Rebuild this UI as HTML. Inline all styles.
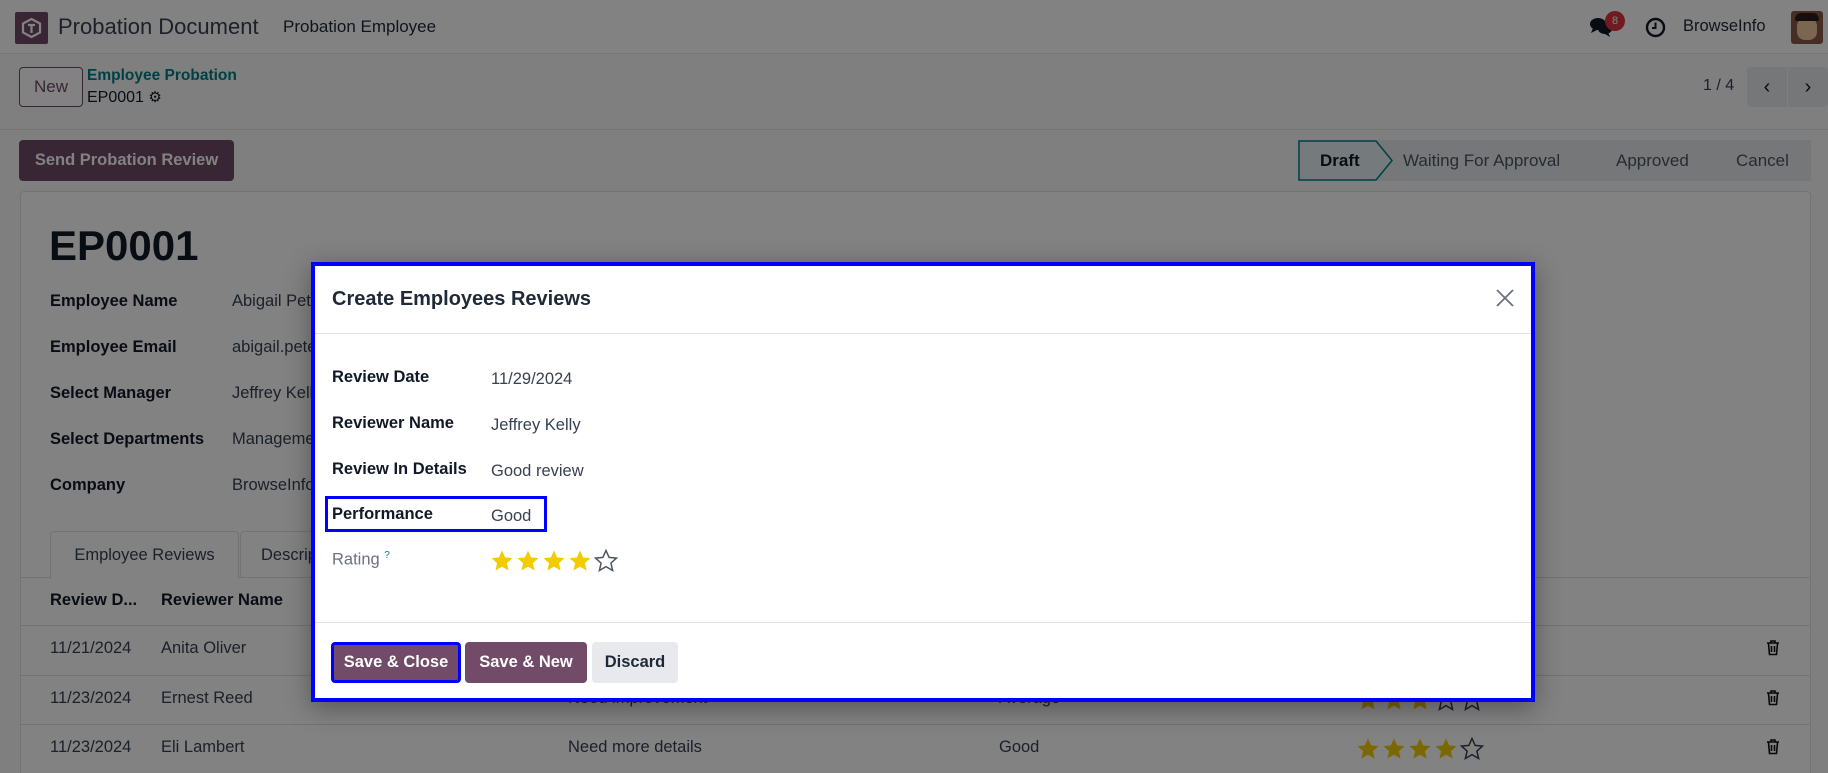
<!DOCTYPE html>
<html><head><meta charset="utf-8">
<style>
*{box-sizing:border-box;margin:0;padding:0}
html{width:1828px;height:773px;overflow:hidden}
body{width:1828px;height:773px;overflow:hidden;position:relative;font-family:"Liberation Sans",sans-serif;background:#f9fafb;color:#374151}
.a{position:absolute;white-space:nowrap}
.b{font-weight:bold;color:#111827}
.overlay{position:absolute;left:0;top:0;width:1828px;height:773px;background:rgba(0,0,0,0.49)}
.line{position:absolute;height:1px;background:#dee2e6}
.seg{position:absolute;top:140px;height:41px;background:#e7e9ed;color:#4b5563;font-size:17px;line-height:41px;clip-path:polygon(0 0,calc(100% - 16px) 0,100% 50%,calc(100% - 16px) 100%,0 100%,16px 50%)}
.modal{position:absolute;left:311px;top:262px;width:1224px;height:440px;background:#fff;border:4px solid #0000ff;box-shadow:0 6px 24px rgba(0,0,0,.35)}
.ml{position:absolute;left:17px;font-size:16.5px;font-weight:bold;color:#111827}
.mv{position:absolute;left:176px;font-size:16.5px;color:#374151}
.btn{position:absolute;top:376px;height:41px;border-radius:4px;font-size:16.5px;line-height:41px;text-align:center;font-weight:bold}
</style></head><body>
<svg width="0" height="0" style="position:absolute"><defs><path id="st" d="M12 1.5l3.1 6.9 7.4.7-5.6 5 1.7 7.4L12 17.6 5.4 21.5l1.7-7.4-5.6-5 7.4-.7z"/></defs></svg>
<!-- navbar -->
<div class="a" style="left:0;top:0;width:1828px;height:54px;background:#fff;border-bottom:1px solid #e5e7eb"></div>
<div class="a" style="left:15px;top:12px;width:33px;height:32px;background:#714b67;border-radius:2px"></div>
<svg class="a" style="left:19px;top:16px" width="25" height="24" viewBox="0 0 25 24"><path d="M12.5 3 L21 7.5 L21 16.5 L12.5 21 L4 16.5 L4 7.5Z" fill="none" stroke="#fff" stroke-width="2.2"/><path d="M9 9 h7 M12.5 9 v8" stroke="#fff" stroke-width="2.2"/></svg>
<div class="a" style="left:58px;top:14px;font-size:22px;color:#374151">Probation Document</div>
<div class="a" style="left:283px;top:17px;font-size:17px;color:#1f2937">Probation Employee</div>
<svg class="a" style="left:1589px;top:16px" width="24" height="22" viewBox="0 0 24 22"><ellipse cx="9" cy="8" rx="8" ry="6" fill="#111827"/><path d="M4 12 l-2 5 l6-3z" fill="#111827"/><ellipse cx="16" cy="13" rx="7" ry="5" fill="#111827"/><path d="M19 16 l2 5 l-5-3z" fill="#111827"/></svg>
<div class="a" style="left:1605px;top:11px;width:20px;height:20px;border-radius:10px;background:#d9363e;color:#fff;font-size:11px;line-height:20px;text-align:center">8</div>
<svg class="a" style="left:1645px;top:17px" width="21" height="21" viewBox="0 0 21 21"><circle cx="10.5" cy="10.5" r="8.5" fill="none" stroke="#111827" stroke-width="2.4"/><path d="M10.5 5.5 v5.5 h-3.5" fill="none" stroke="#111827" stroke-width="2"/></svg>
<div class="a" style="left:1683px;top:17px;font-size:16.5px;color:#1f2937">BrowseInfo</div>
<div class="a" style="left:1791px;top:11px;width:32px;height:33px;background:#8a5a4a;border-radius:3px"></div>
<div class="a" style="left:1797px;top:18px;width:20px;height:22px;background:#f1c8a0;border-radius:8px"></div>
<div class="a" style="left:1795px;top:13px;width:24px;height:8px;background:#2a1d1a;border-radius:6px 6px 2px 2px"></div>
<!-- control panel -->
<div class="a" style="left:19px;top:67px;width:64px;height:40px;border:1px solid #714b67;border-radius:4px;background:#fff;color:#714b67;font-size:17px;line-height:38px;text-align:center">New</div>
<div class="a" style="left:87px;top:67px;font-size:15.5px;font-weight:bold;color:#017e84">Employee Probation</div>
<div class="a" style="left:87px;top:88px;font-size:16px;color:#111827">EP0001 <span style="font-size:15px">⚙</span></div>
<div class="a" style="left:1703px;top:77px;font-size:16px;color:#374151">1 / 4</div>
<div class="a" style="left:1747px;top:67px;width:40px;height:40px;background:#e7e9ed;border-radius:4px 0 0 4px;text-align:center;line-height:40px;font-size:20px;color:#111827">‹</div>
<div class="a" style="left:1788px;top:67px;width:40px;height:40px;background:#e7e9ed;border-radius:0 4px 4px 0;text-align:center;line-height:40px;font-size:20px;color:#111827">›</div>
<div class="line" style="left:0;top:129px;width:1828px"></div>
<div class="a" style="left:19px;top:140px;width:215px;height:41px;background:#714b67;border-radius:4px;color:#fff;font-size:16.5px;font-weight:bold;line-height:41px;text-align:center">Send Probation Review</div>
<!-- statusbar -->
<div class="a" style="left:1298px;top:140px;width:513px;height:41px;background:#e7e9ed"></div>
<div class="seg" style="left:1690px;width:121px;clip-path:polygon(0 0,100% 0,100% 100%,0 100%,16px 50%);padding-left:46px">Cancel</div>
<div class="seg" style="left:1575px;width:130px;padding-left:41px">Approved</div>
<div class="seg" style="left:1378px;width:214px;padding-left:25px">Waiting For Approval</div>
<svg class="a" style="left:1298px;top:140px" width="96" height="41"><path d="M1 1 H78 L94 20.5 L78 40 H1Z" fill="#e6f2f3" stroke="#017e84" stroke-width="1.5"/><text x="22" y="26" font-family="Liberation Sans" font-size="17" font-weight="bold" fill="#111827">Draft</text></svg>
<!-- sheet -->
<div class="a" style="left:20px;top:191px;width:1791px;height:582px;background:#fff;border:1px solid #dee2e6;border-bottom:none;border-radius:4px 4px 0 0"></div>
<div class="a b" style="left:49px;top:222px;font-size:42px">EP0001</div>
<div class="a b" style="left:50px;top:292px;font-size:16.5px">Employee Name</div><div class="a" style="left:232px;top:292px;font-size:16.5px">Abigail Peterson</div>
<div class="a b" style="left:50px;top:338px;font-size:16.5px">Employee Email</div><div class="a" style="left:232px;top:338px;font-size:16.5px">abigail.peterson</div>
<div class="a b" style="left:50px;top:384px;font-size:16.5px">Select Manager</div><div class="a" style="left:232px;top:384px;font-size:16.5px">Jeffrey Kelly</div>
<div class="a b" style="left:50px;top:430px;font-size:16.5px">Select Departments</div><div class="a" style="left:232px;top:430px;font-size:16.5px">Management</div>
<div class="a b" style="left:50px;top:476px;font-size:16.5px">Company</div><div class="a" style="left:232px;top:476px;font-size:16.5px">BrowseInfo</div>
<div class="line" style="left:21px;top:577px;width:1789px"></div>
<div class="a" style="left:50px;top:531px;width:189px;height:48px;background:#fff;border:1px solid #dee2e6;border-bottom:none;border-radius:4px 4px 0 0;font-size:16.5px;line-height:46px;text-align:center;color:#374151">Employee Reviews</div>
<div class="a" style="left:240px;top:531px;width:150px;height:47px;border:1px solid #dee2e6;border-bottom:none;border-radius:4px 4px 0 0;font-size:16.5px;line-height:46px;padding-left:20px;color:#374151">Description</div>
<div class="a b" style="left:50px;top:591px;font-size:16.5px">Review D...</div>
<div class="a b" style="left:161px;top:591px;font-size:16.5px">Reviewer Name</div>
<div class="line" style="left:21px;top:625px;width:1789px"></div>
<div class="line" style="left:21px;top:675px;width:1789px"></div>
<div class="line" style="left:21px;top:724px;width:1789px"></div>
<div class="a" style="left:50px;top:639px;font-size:16.5px">11/21/2024</div><div class="a" style="left:161px;top:639px;font-size:16.5px">Anita Oliver</div>
<div class="a" style="left:50px;top:689px;font-size:16.5px">11/23/2024</div><div class="a" style="left:161px;top:689px;font-size:16.5px">Ernest Reed</div>
<div class="a" style="left:568px;top:689px;font-size:16.5px">Need improvement</div><div class="a" style="left:999px;top:689px;font-size:16.5px">Average</div>
<svg class="a" style="left:1356px;top:688px" width="134" height="24" viewBox="0 0 134 24"><use href="#st" x="0" fill="#f3cc00"/><use href="#st" x="26" fill="#f3cc00"/><use href="#st" x="52" fill="#f3cc00"/><use href="#st" x="78" fill="none" stroke="#374151" stroke-width="1.5"/><use href="#st" x="104" fill="none" stroke="#374151" stroke-width="1.5"/></svg>
<div class="a" style="left:50px;top:738px;font-size:16.5px">11/23/2024</div><div class="a" style="left:161px;top:738px;font-size:16.5px">Eli Lambert</div>
<div class="a" style="left:568px;top:738px;font-size:16.5px">Need more details</div><div class="a" style="left:999px;top:738px;font-size:16.5px">Good</div>
<svg class="a" style="left:1356px;top:737px" width="134" height="24" viewBox="0 0 134 24"><use href="#st" x="0" fill="#f3cc00"/><use href="#st" x="26" fill="#f3cc00"/><use href="#st" x="52" fill="#f3cc00"/><use href="#st" x="78" fill="#f3cc00"/><use href="#st" x="104" fill="none" stroke="#374151" stroke-width="1.5"/></svg>
<svg class="a" style="left:1766px;top:640px" width="14" height="16" viewBox="0 0 14 16"><path d="M1 3h12M5 3V1h4v2M2.5 3.5l1 11h7l1-11M5.5 6v6M8.5 6v6" fill="none" stroke="#111" stroke-width="1.6"/></svg>
<svg class="a" style="left:1766px;top:690px" width="14" height="16" viewBox="0 0 14 16"><path d="M1 3h12M5 3V1h4v2M2.5 3.5l1 11h7l1-11M5.5 6v6M8.5 6v6" fill="none" stroke="#111" stroke-width="1.6"/></svg>
<svg class="a" style="left:1766px;top:739px" width="14" height="16" viewBox="0 0 14 16"><path d="M1 3h12M5 3V1h4v2M2.5 3.5l1 11h7l1-11M5.5 6v6M8.5 6v6" fill="none" stroke="#111" stroke-width="1.6"/></svg>
<div class="overlay"></div>
<!-- modal -->
<div class="modal">
<div class="a" style="left:17px;top:22px;font-size:20px;font-weight:bold;color:#1f2937">Create Employees Reviews</div>
<svg class="a" style="left:1180px;top:22px" width="20" height="20" viewBox="0 0 20 20"><path d="M2 2L18 18M18 2L2 18" stroke="#6b7280" stroke-width="1.8"/></svg>
<div class="line" style="left:0;top:67px;width:1216px"></div>
<div class="ml" style="top:102px">Review Date</div><div class="mv" style="top:104px">11/29/2024</div>
<div class="ml" style="top:148px">Reviewer Name</div><div class="mv" style="top:150px">Jeffrey Kelly</div>
<div class="ml" style="top:194px">Review In Details</div><div class="mv" style="top:196px">Good review</div>
<div class="a" style="left:10px;top:230px;width:222px;height:36px;border:3px solid #0000ff"></div>
<div class="ml" style="top:239px">Performance</div><div class="mv" style="top:241px">Good</div>
<div class="ml" style="top:284px;font-weight:normal;color:#6b7280">Rating <sup style="color:#017e84;font-size:10px">?</sup></div>
<svg class="a" style="left:175px;top:283px" width="134" height="24" viewBox="0 0 134 24"><use href="#st" x="0" fill="#f3cc00"/><use href="#st" x="26" fill="#f3cc00"/><use href="#st" x="52" fill="#f3cc00"/><use href="#st" x="78" fill="#f3cc00"/><use href="#st" x="104" fill="none" stroke="#4b5563" stroke-width="1.5"/></svg>
<div class="line" style="left:0;top:356px;width:1216px"></div>
<div class="btn" style="left:16px;width:130px;background:#714b67;color:#fff;border:3px solid #0000ff;line-height:35px">Save &amp; Close</div>
<div class="btn" style="left:150px;width:122px;background:#714b67;color:#fff">Save &amp; New</div>
<div class="btn" style="left:277px;width:86px;background:#e7e9ed;color:#1f2937">Discard</div>
</div>
</body></html>
